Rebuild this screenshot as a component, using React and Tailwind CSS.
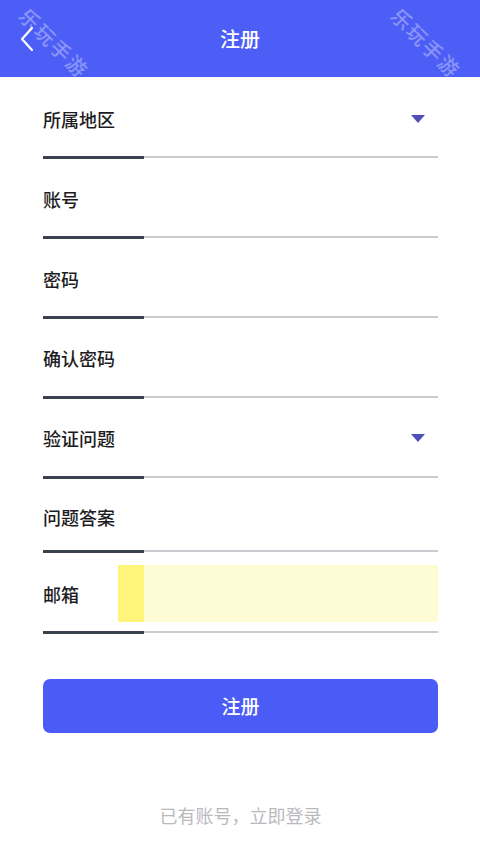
import React from 'react';

const fields = [
  { label: '所属地区', arrow: true, pt: 'pt-[30px]', pb: 'pb-[25px]' },
  { label: '账号', pt: 'pt-[29px]', pb: 'pb-[25px]' },
  { label: '密码', pt: 'pt-[29px]', pb: 'pb-[25px]' },
  { label: '确认密码', pt: 'pt-[28px]', pb: 'pb-[26px]' },
  { label: '验证问题', arrow: true, pt: 'pt-[28px]', pb: 'pb-[26px]' },
  { label: '问题答案', pt: 'pt-[27px]', pb: 'pb-[21px]' },
];

const Line = () => (
  <div className="relative h-[2px] bg-[#cbccd2]">
    <div className="absolute left-0 top-[-0.5px] h-[3px] w-[101px] bg-[#39404e]" />
  </div>
);

const Field = ({ label, arrow, pt, pb }) => (
  <div className={pt}>
    <div className={pb}>
      <div className="flex h-[24px] items-center justify-between">
        <span className="text-[18px] leading-[24px] font-medium text-[#1d1d1f]">{label}</span>
        {arrow && (
          <svg width="14" height="8" viewBox="0 0 14 8" className="mr-[13px]">
            <path d="M0 0 H14 L7 8 Z" fill="#4f4fb8" />
          </svg>
        )}
      </div>
    </div>
    <Line />
  </div>
);

const Watermark = ({ className }) => (
  <span
    className={`pointer-events-none absolute rotate-45 select-none whitespace-nowrap text-[20px] leading-[26px] font-medium tracking-[2px] text-white/35 ${className}`}
  >
    乐玩手游
  </span>
);

export default function App() {
  return (
    <div
      className="relative min-h-[853px] w-[480px] bg-white"
      style={{ fontFamily: '"Noto Sans CJK SC", "Noto Sans", sans-serif' }}
    >
      {/* 顶部标题栏 */}
      <header className="relative flex h-[77px] items-center justify-center bg-[#4d5ef6]">
        <svg width="14" height="26" viewBox="0 0 14 26" className="absolute left-[20px] top-[26px]">
          <polyline points="12,2 2,13 12,24" fill="none" stroke="white" strokeWidth="2.2" strokeLinecap="round" strokeLinejoin="round" />
        </svg>
        <h1 className="text-[20px] font-medium text-white">注册</h1>
      </header>

      {/* 表单 */}
      <div className="pl-[43px] pr-[42px]">
        {fields.map((f) => (
          <Field key={f.label} {...f} />
        ))}

        <div className="pt-[13px]">
          <div className="flex h-[57px] items-center">
            <span className="w-[75px] text-[18px] leading-[24px] font-medium text-[#1d1d1f]">邮箱</span>
            <div className="flex h-full flex-1">
              <div className="w-[26px] bg-[#fff57a]" />
              <div className="flex-1 bg-[#fefcd4]" />
            </div>
          </div>
          <div className="pt-[9px]">
            <Line />
          </div>
        </div>

        <button
          type="button"
          className="mt-[46px] flex h-[54px] w-full items-center justify-center rounded-[7px] bg-[#4b5cf6] text-[19px] font-medium text-white"
        >
          注册
        </button>

        <p className="mt-[70px] text-center text-[18px] leading-[24px] text-[#b9b9bd]">已有账号，立即登录</p>
      </div>

      <Watermark className="left-[10px] top-[30px]" />
      <Watermark className="left-[382px] top-[30px]" />
    </div>
  );
}
